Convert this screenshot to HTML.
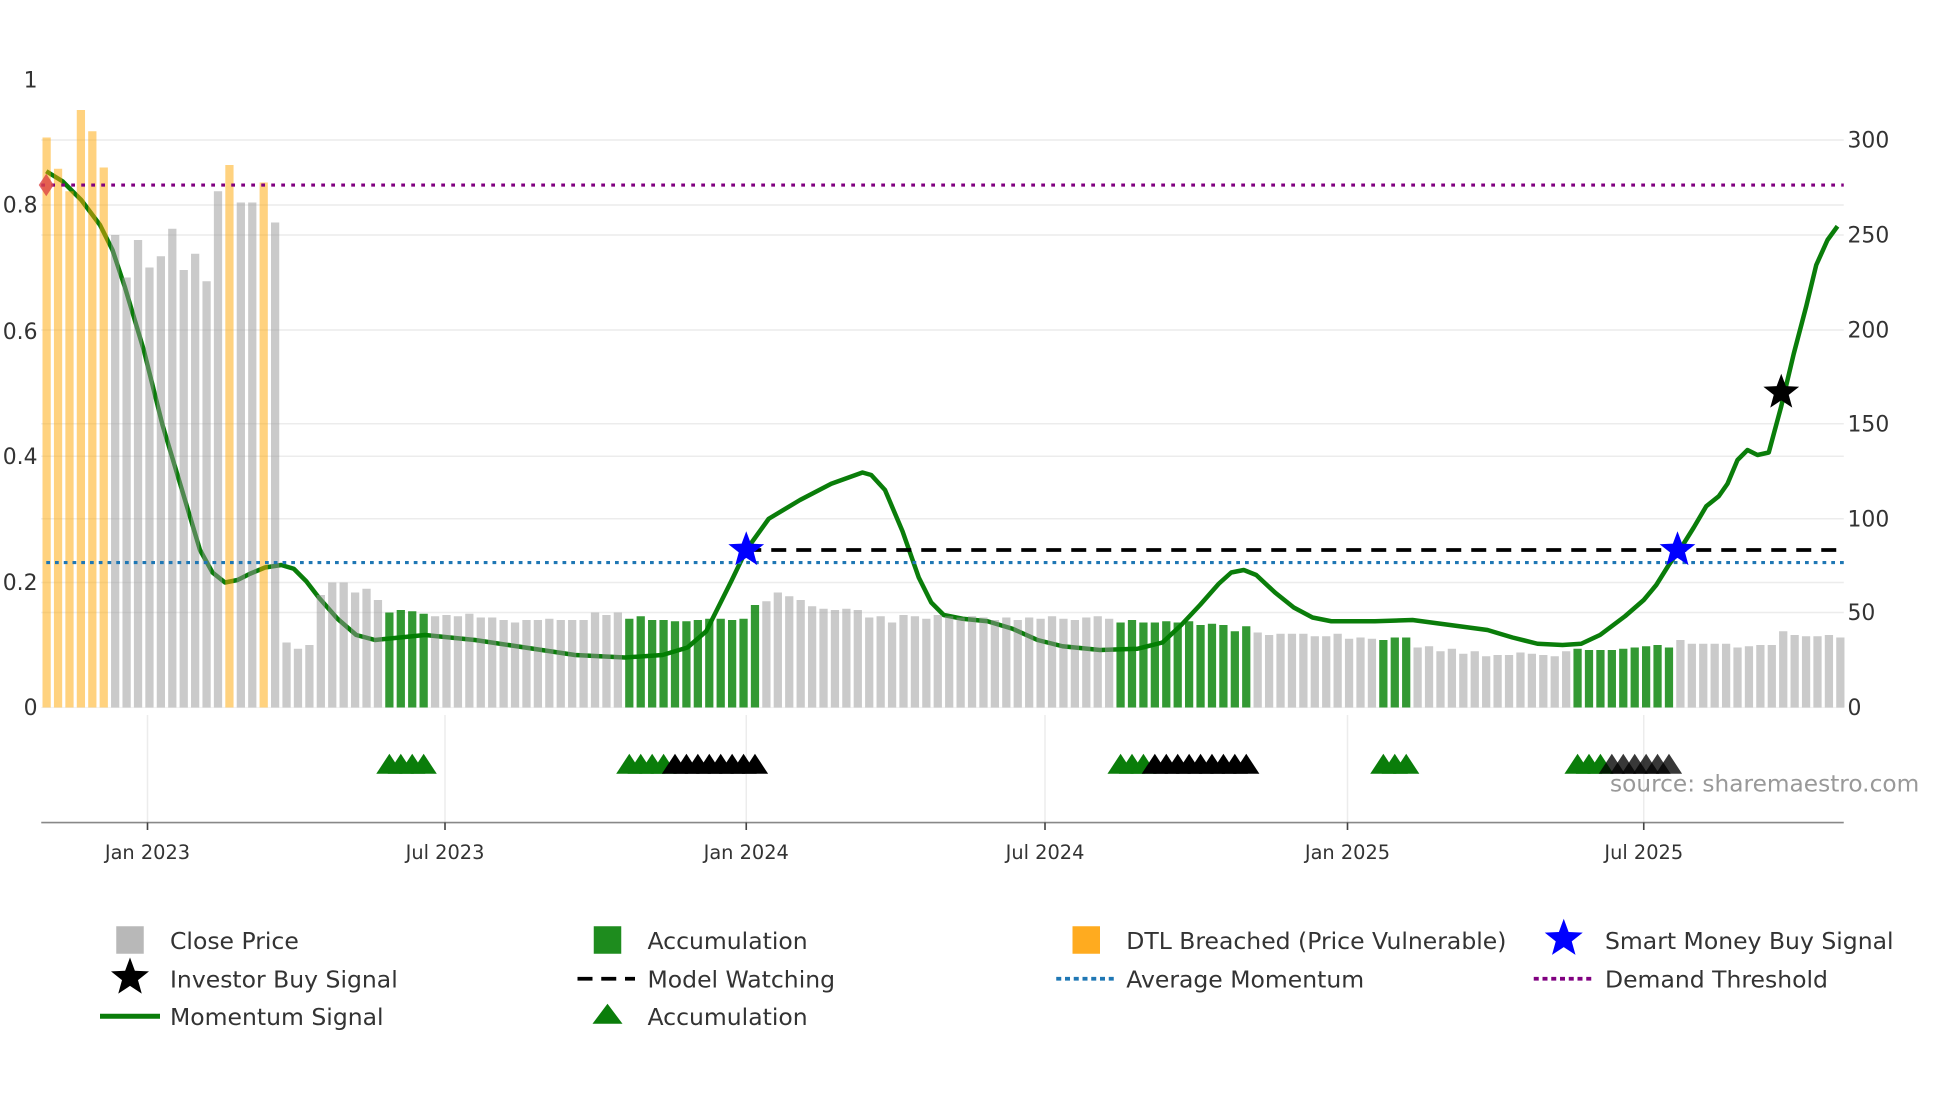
<!DOCTYPE html>
<html><head><meta charset="utf-8"><style>
html,body{margin:0;padding:0;background:#fff;width:1960px;height:1102px;overflow:hidden}
svg{display:block}
text{font-family:"DejaVu Sans","Liberation Sans",sans-serif}
</style></head><body>
<svg id="s" width="1960" height="1102" viewBox="0 0 1568 881.6" xmlns="http://www.w3.org/2000/svg">
<g stroke="#ececec" stroke-width="1.2">
<line x1="33" x2="1475" y1="112" y2="112"/><line x1="33" x2="1475" y1="164" y2="164"/><line x1="33" x2="1475" y1="188" y2="188"/>
<line x1="33" x2="1475" y1="264" y2="264"/><line x1="33" x2="1475" y1="339" y2="339"/><line x1="33" x2="1475" y1="365" y2="365"/>
<line x1="33" x2="1475" y1="415" y2="415"/><line x1="33" x2="1475" y1="466" y2="466"/><line x1="33" x2="1475" y1="490" y2="490"/>
<line x1="118" x2="118" y1="572" y2="658"/><line x1="356" x2="356" y1="572" y2="658"/><line x1="597" x2="597" y1="572" y2="658"/>
<line x1="836" x2="836" y1="572" y2="658"/><line x1="1078" x2="1078" y1="572" y2="658"/><line x1="1315" x2="1315" y1="572" y2="658"/>
</g>
<line x1="33" x2="1475" y1="566" y2="566" stroke="#f2f2f2" stroke-width="1"/>
<polyline id="mom" fill="none" stroke="#0a7d0a" stroke-width="3.6" stroke-linejoin="round"/>
<g id="bars"></g>
<line x1="33" x2="1475" y1="148" y2="148" stroke="#800080" stroke-width="2.5" stroke-dasharray="3,5"/>
<line x1="37" x2="1475" y1="450" y2="450" stroke="#1f77b4" stroke-width="2.5" stroke-dasharray="3,4"/>
<line x1="597" x2="1475" y1="440" y2="440" stroke="#000" stroke-width="3" stroke-dasharray="12,8"/>
<path d="M37 139 L43 148 L37 157 L31 148Z" fill="#d44" opacity="0.8"/>
<g id="tri"></g>
<g id="stars"></g>
<line x1="33" x2="1475" y1="658" y2="658" stroke="#888" stroke-width="1.3"/>
<g stroke="#444" stroke-width="1.3">
<line x1="118" x2="118" y1="658" y2="664"/><line x1="356" x2="356" y1="658" y2="664"/><line x1="597" x2="597" y1="658" y2="664"/>
<line x1="836" x2="836" y1="658" y2="664"/><line x1="1078" x2="1078" y1="658" y2="664"/><line x1="1315" x2="1315" y1="658" y2="664"/>
</g>
<g font-size="15.5" fill="#333" text-anchor="middle">
<text x="118" y="687">Jan 2023</text><text x="356" y="687">Jul 2023</text><text x="597" y="687">Jan 2024</text>
<text x="836" y="687">Jul 2024</text><text x="1078" y="687">Jan 2025</text><text x="1315" y="687">Jul 2025</text>
</g>
<g font-size="17.5" fill="#333" text-anchor="end">
<text x="30" y="70">1</text><text x="30" y="170">0.8</text><text x="30" y="271">0.6</text>
<text x="30" y="371">0.4</text><text x="30" y="472">0.2</text><text x="30" y="572">0</text>
</g>
<g font-size="17.5" fill="#333">
<text x="1478" y="118">300</text><text x="1478" y="194">250</text><text x="1478" y="270">200</text>
<text x="1478" y="345">150</text><text x="1478" y="421">100</text><text x="1478" y="496">50</text><text x="1478" y="572">0</text>
</g>
<text x="1288" y="633" font-size="18.6" fill="#999">source: sharemaestro.com</text>
<g font-size="18.8" fill="#333">
<rect x="93" y="741" width="22" height="22" fill="#b8b8b8"/><text x="136" y="759">Close Price</text>
<rect x="475" y="741" width="22" height="22" fill="#1e8c1e"/><text x="518" y="759">Accumulation</text>
<rect x="858" y="741" width="22" height="22" fill="#ffab1f"/><text x="901" y="759">DTL Breached (Price Vulnerable)</text>
<text x="1284" y="759">Smart Money Buy Signal</text>
<text x="136" y="790">Investor Buy Signal</text>
<line x1="462" x2="508" y1="783" y2="783" stroke="#000" stroke-width="3" stroke-dasharray="12,7"/><text x="518" y="790">Model Watching</text>
<line x1="845" x2="891" y1="783" y2="783" stroke="#1f77b4" stroke-width="3" stroke-dasharray="4,3"/><text x="901" y="790">Average Momentum</text>
<line x1="1227" x2="1273" y1="783" y2="783" stroke="#800080" stroke-width="3" stroke-dasharray="4,3"/><text x="1284" y="790">Demand Threshold</text>
<line x1="80" x2="128" y1="813" y2="813" stroke="#0a7d0a" stroke-width="4"/><text x="136" y="820">Momentum Signal</text>
<path d="M474 819 L486 803 L498 819Z" fill="#0a7d0a"/><text x="518" y="820">Accumulation</text>
</g>
<g id="lstars"></g>
</svg>
<script>
var NS="http://www.w3.org/2000/svg";
function el(t,a,p){var e=document.createElementNS(NS,t);for(var k in a)e.setAttribute(k,a[k]);p.appendChild(e);return e;}
var pts=[[37,137],[50,145],[65,160],[80,180],[90,200],[100,230],[115,280],[130,340],[145,390],[160,440],[170,458],[180,466],[190,464],[200,459],[212,454],[225,452],[235,455],[245,465],[255,478],[270,495],[285,508],[300,512],[320,510],[340,508],[380,512],[420,518],[460,524],[500,526],[530,524],[550,518],[565,505],[575,485],[585,465],[597,440],[615,415],[640,400],[665,387],[690,378],[697,380],[708,392],[722,425],[735,462],[745,482],[755,492],[770,495],[790,497],[810,503],[830,512],[850,517],[880,520],[910,519],[930,514],[945,500],[960,484],[975,467],[985,458],[995,456],[1005,460],[1020,474],[1035,486],[1050,494],[1065,497],[1100,497],[1130,496],[1160,500],[1190,504],[1210,510],[1230,515],[1250,516],[1265,515],[1280,508],[1300,493],[1315,480],[1325,468],[1335,452],[1345,438],[1355,422],[1365,405],[1375,397],[1382,387],[1390,368],[1398,360],[1406,364],[1415,362],[1425,325],[1435,283],[1445,245],[1453,212],[1462,192],[1470,181]];
document.getElementById("mom").setAttribute("points",pts.map(function(p){return p.join(",")}).join(" "));
var H=[["O",[456,431,413,478,461,432]],["G",[378,344,374,352,361,383,350,363,341,413]],["O",[434]],["G",[404,404]],["O",[420]],["G",[388,52,47,50,90,100,100,92,95,86]],["A",[76,78,77,75]],["G",[73,74,73,75,72,72,70,68,70,70,71,70,70,70,76,74,76]],["A",[71,73,70,70,69,69,70,71,71,70,71,82]],["G",[85,92,89,86,81,79,78,79,78,72,73,68,74,73,71,74,73,72,73,72,70,72,70,72,71,73,71,70,72,73,71]],["A",[68,70,68,68,69,68,69,66,67,66,61,65]],["G",[60,58,59,59,59,57,57,59,55,56,55]],["A",[54,56,56]],["G",[48,49,45,47,43,45,41,42,42,44,43,42,41,45]],["A",[47,46,46,46,47,48,49,50,48]],["G",[54,51,51,51,51,48,49,50,50,61,58,57,57,58,56]]];
var col={O:"rgba(255,165,0,0.5)",G:"rgba(150,150,150,0.5)",A:"rgba(0,128,0,0.8)"};
var P=9.14,bg=document.getElementById("bars"),i=0;
H.forEach(function(g){g[1].forEach(function(h){el("rect",{x:(34+P*i).toFixed(2),y:566-h,width:6.6,height:h,fill:col[g[0]]},bg);i++;});});
var tg=document.getElementById("tri");
function tri(a,b,c){for(var j=a;j<=b;j++){var cx=37.3+P*j;el("path",{d:"M"+(cx-10.5)+" 619 L"+cx+" 603 L"+(cx+10.5)+" 619Z",fill:c},tg);}}
tri(30,33,"#0a7d0a");tri(51,54,"#0a7d0a");tri(55,62,"#000");tri(94,96,"#0a7d0a");tri(97,105,"#000");tri(117,119,"#0a7d0a");tri(134,136,"#0a7d0a");tri(137,142,"rgba(0,0,0,0.78)");
function star(cx,cy,r,c,p){var d="";for(var k=0;k<10;k++){var rr=k%2?r*0.42:r,a=-Math.PI/2+k*Math.PI/5;d+=(k?"L":"M")+(cx+rr*Math.cos(a)).toFixed(1)+" "+(cy+rr*Math.sin(a)).toFixed(1);}el("path",{d:d+"Z",fill:c},p);}
var sg=document.getElementById("stars");
star(597,440,15,"#0000ff",sg);star(1342,440,15,"#0000ff",sg);star(1425,314,15,"#000",sg);
var lg=document.getElementById("lstars");
star(104,782,16,"#000",lg);star(1251,751,16,"#0000ff",lg);
</script>
</body></html>
